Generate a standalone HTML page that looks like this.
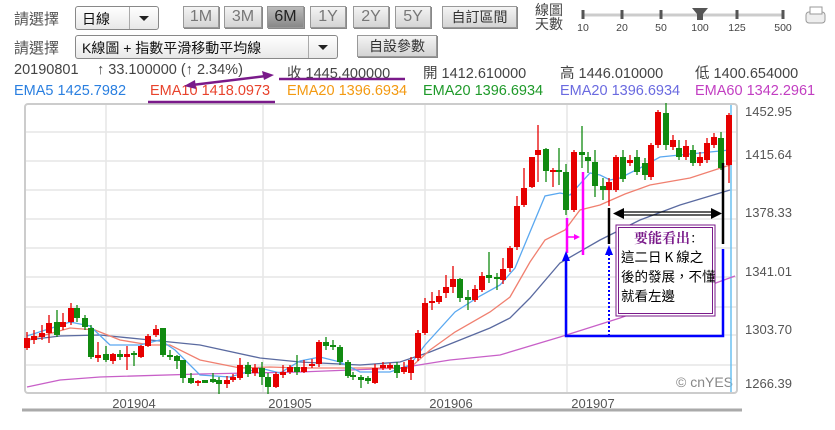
<!DOCTYPE html>
<html><head><meta charset="utf-8"><style>
html,body{margin:0;padding:0;background:#fff;width:835px;height:430px;overflow:hidden;font-family:"Liberation Sans","Noto Sans CJK TC",sans-serif;}
.a{position:absolute;white-space:nowrap;}
.lbl{font-size:15px;color:#555;}
.sel{position:absolute;border:1px solid #888;border-radius:3px;background:linear-gradient(#fff,#e8e8e8);font-size:14px;color:#111;box-sizing:border-box;}
.sel .t{position:absolute;left:6px;top:2px;}
.sel .d{position:absolute;right:0;top:0;bottom:0;width:28px;border-left:1px solid #aaa;}
.sel .d:after{content:"";position:absolute;left:9px;top:9px;border-left:5px solid transparent;border-right:5px solid transparent;border-top:5px solid #222;}
.btn{position:absolute;top:6px;height:22px;box-sizing:border-box;border:1px solid #999;background:linear-gradient(#f4f4f4,#d4d4d4);color:#777;font-size:16px;text-align:center;line-height:20px;box-shadow:1px 1px 0 #888;}
.r3{font-size:14.5px;color:#444;top:62px;}
.r4{font-size:14.5px;top:83px;}
</style></head><body>
<div class="a lbl" style="left:14px;top:8px;">請選擇</div>
<div class="sel" style="left:75px;top:6px;width:84px;height:24px;"><span class="t">日線</span><span class="d"></span></div>
<div class="btn" style="left:183px;width:36px;">1M</div>
<div class="btn" style="left:224px;width:38px;">3M</div>
<div class="btn" style="left:267px;width:37px;background:linear-gradient(#bbb,#888);color:#222;">6M</div>
<div class="btn" style="left:310px;width:36px;">1Y</div>
<div class="btn" style="left:353px;width:36px;">2Y</div>
<div class="btn" style="left:395px;width:36px;">5Y</div>
<div class="btn" style="left:442px;width:75px;font-size:14px;color:#333;">自訂區間</div>
<div class="a" style="left:535px;top:3px;font-size:14px;line-height:14px;color:#444;">線圖<br>天數</div>
<div class="a lbl" style="left:14px;top:37px;">請選擇</div>
<div class="sel" style="left:75px;top:35px;width:263px;height:24px;"><span class="t">K線圖 + 指數平滑移動平均線</span><span class="d"></span></div>
<div class="btn" style="left:357px;top:35px;width:80px;font-size:14px;color:#333;">自設參數</div>
<div class="a r3" style="left:14px;">20190801</div>
<div class="a r3" style="left:97px;">↑ 33.100000 (↑ 2.34%)</div>
<div class="a r3" style="left:287px;">收 1445.400000</div>
<div class="a r3" style="left:423px;">開 1412.610000</div>
<div class="a r3" style="left:560px;">高 1446.010000</div>
<div class="a r3" style="left:695px;">低 1400.654000</div>
<div class="a r4" style="left:14px;color:#2a7fe0;">EMA5 1425.7982</div>
<div class="a r4" style="left:150px;color:#e8432c;">EMA10 1418.0973</div>
<div class="a r4" style="left:287px;color:#f39a12;">EMA20 1396.6934</div>
<div class="a r4" style="left:423px;color:#1f9a2a;">EMA20 1396.6934</div>
<div class="a r4" style="left:560px;color:#6a6ae0;">EMA20 1396.6934</div>
<div class="a r4" style="left:695px;color:#c23ec2;">EMA60 1342.2961</div>
<svg id="s" width="835" height="430" style="position:absolute;left:0;top:0;" xmlns="http://www.w3.org/2000/svg">
<g id="bg"></g>
</svg>
<script>
var s=document.getElementById('s'),h='';
h+='<line x1="583" y1="15" x2="783" y2="15" stroke="#ccc" stroke-width="3"/>';
[583,622,661,737,783].forEach(function(x){h+='<rect x="'+(x-1.5)+'" y="10" width="3" height="9" fill="#555"/>';});
h+='<polygon points="692,8 708,8 703,14 703,20 697,20 697,14" fill="#555"/>';
[[583,'10'],[622,'20'],[661,'50'],[700,'100'],[737,'125'],[783,'500']].forEach(function(a){h+='<text x="'+a[0]+'" y="31" font-size="10.5" fill="#444" text-anchor="middle" font-family="Liberation Sans">'+a[1]+'</text>';});
h+='<rect x="806" y="12" width="19" height="11" rx="3" fill="#eee" stroke="#999"/><rect x="810" y="7" width="12" height="7" fill="#fff" stroke="#999"/>';
h+='<rect x="25" y="104" width="712" height="289" rx="3" fill="#fff" stroke="#ccc" stroke-width="2"/>';
h+='<line x1="22" y1="410" x2="742" y2="410" stroke="#aaa" stroke-width="3"/>';
[132,161,190,219,248,277,307,335,365].forEach(function(y){h+='<line x1="26" y1="'+y+'" x2="736" y2="'+y+'" stroke="#e6e6e6" stroke-width="1.5"/>';});
[106,263,425,567].forEach(function(x){h+='<line x1="'+x+'" y1="105" x2="'+x+'" y2="392" stroke="#e6e6e6" stroke-width="1.5"/>';});
[['1452.95',116],['1415.64',159],['1378.33',217],['1341.01',276],['1303.70',334],['1266.39',388]].forEach(function(a){h+='<text x="745" y="'+a[1]+'" font-size="13" fill="#555" font-family="Liberation Sans">'+a[0]+'</text>';});
[['201904',134],['201905',290],['201906',451],['201907',593]].forEach(function(a){h+='<text x="'+a[1]+'" y="408" font-size="13" fill="#555" text-anchor="middle" font-family="Liberation Sans">'+a[0]+'</text>';});
h+='<text x="733" y="387" font-size="14" fill="#888" text-anchor="end" font-family="Liberation Sans">© cnYES</text>';
h+='<line x1="731" y1="105" x2="731" y2="392" stroke="#6cc0f0" stroke-width="1.5"/>';
function pl(p,c){h+='<polyline fill="none" stroke="'+c+'" stroke-width="1.3" points="'+p+'"/>';}
pl('27,387 60,380 100,377 200,374 300,372 400,368 450,360 500,355 560,337 620,318 680,296 735,276','#c860c8');
pl('27,340 60,336 100,335 150,340 200,345 260,358 300,362 360,365 400,362 430,352 455,342 490,328 510,318 530,298 560,263 600,240 640,220 680,205 730,190','#5a6aa0');
pl('27,340 70,328 95,330 120,340 150,345 170,345 200,360 240,368 270,367 300,368 340,368 380,368 410,368 430,350 455,332 490,312 510,297 530,262 545,240 565,230 580,210 600,205 625,194 650,185 690,178 730,165','#f08070');
pl('27,336 70,322 90,326 110,345 140,345 160,340 175,350 200,375 230,377 260,368 280,373 300,361 320,357 340,362 360,372 390,372 410,365 425,345 455,312 480,296 500,285 515,268 530,232 545,196 560,193 570,195 590,173 600,175 610,180 620,178 640,168 660,157 700,153 730,150','#5aa8f0');
var C=[[27,348,338,332,350],[34,340,336,330,344],[42,337,333,325,340],[49,333,323,315,343],[57,322,335,310,337],[63,327,322,313,330],[71,322,308,303,325],[77,308,318,305,322],[85,318,327,315,330],[91,328,357,325,359],[98,358,355,342,362],[106,354,360,346,362],[113,361,354,353,364],[120,354,357,350,360],[127,357,354,346,370],[134,353,355,351,366],[141,357,346,345,358],[148,346,336,334,347],[156,335,329,325,337],[163,328,355,328,357],[170,355,357,350,360],[177,356,361,355,369],[183,360,378,360,383],[191,378,383,373,384],[198,383,381,380,386],[205,381,382,381,382],[213,380,381,373,383],[219,380,384,377,394],[227,384,380,376,388],[233,380,377,374,382],[240,378,365,358,380],[248,365,374,362,377],[255,373,368,364,376],[262,368,377,362,385],[268,377,387,373,394],[276,387,374,372,388],[283,375,372,365,378],[290,372,367,365,374],[297,367,372,355,375],[304,372,367,360,373],[312,366,364,359,368],[319,364,342,340,367],[326,342,346,337,350],[333,345,347,340,350],[340,347,362,345,365],[348,362,376,360,378],[353,375,377,372,380],[361,377,380,375,388],[368,379,380,376,384],[375,383,368,364,384],[383,367,366,362,370],[390,367,366,363,370],[397,365,373,362,378],[404,372,367,362,374],[411,373,360,357,380],[418,358,333,330,361],[425,333,303,298,335],[432,303,301,292,310],[439,302,296,290,304],[446,293,287,275,298],[453,287,279,266,293],[460,279,298,278,302],[468,298,299,290,310],[475,300,289,285,302],[482,290,276,272,292],[489,276,277,252,283],[497,277,279,273,290],[503,280,269,258,284],[510,268,248,246,272],[517,247,206,196,250],[524,205,188,168,207],[532,187,157,157,188],[538,155,150,125,182],[546,149,171,148,182],[553,172,170,168,187],[559,170,172,148,185],[566,172,210,164,215],[574,210,152,150,212],[582,152,155,126,168],[588,157,161,152,173],[595,162,186,150,197],[603,186,190,178,200],[609,190,182,178,206],[616,190,157,155,192],[623,157,179,150,182],[630,163,160,155,166],[637,157,172,150,175],[645,163,175,158,180],[651,177,145,143,180],[658,145,112,110,148],[666,113,145,103,150],[673,147,140,135,150],[679,148,157,140,160],[686,157,146,140,160],[693,150,163,145,166],[700,163,157,152,166],[707,160,143,138,163],[714,145,137,133,148],[721,138,168,132,170],[729,165,115,113,183]];
C.forEach(function(c){var up=c[2]<c[1],col=up?'#e60000':'#118a11',t=Math.min(c[1],c[2]),b=Math.max(c[1],c[2]);if(b-t<1.5){t-=1;b+=1;}
h+='<line x1="'+c[0]+'" y1="'+c[3]+'" x2="'+c[0]+'" y2="'+c[4]+'" stroke="'+col+'" stroke-width="1.3"/><rect x="'+(c[0]-3)+'" y="'+t+'" width="6" height="'+(b-t)+'" fill="'+col+'"/>';});
var P='#7a1a8a';
h+='<line x1="279" y1="79" x2="405" y2="79" stroke="'+P+'" stroke-width="2.5"/><line x1="148" y1="102" x2="275" y2="102" stroke="'+P+'" stroke-width="2.5"/>';
h+='<line x1="192" y1="85" x2="266" y2="76" stroke="'+P+'" stroke-width="2.5"/><polygon points="184,86 195,80 196,89" fill="'+P+'"/><polygon points="274,75 262,71 264,80" fill="'+P+'"/>';
h+='<line x1="567" y1="218" x2="567" y2="253" stroke="#f0f" stroke-width="2.5"/><line x1="583" y1="172" x2="583" y2="255" stroke="#f0f" stroke-width="2.5"/><line x1="568" y1="237" x2="576" y2="237" stroke="#f0f" stroke-width="1.5"/><polygon points="580,237 574,234 574,240" fill="#f0f"/>';
h+='<line x1="609" y1="208" x2="609" y2="244" stroke="#000" stroke-width="2.5"/><line x1="723" y1="163" x2="723" y2="244" stroke="#000" stroke-width="2.5"/>';
h+='<line x1="620" y1="212" x2="716" y2="212" stroke="#000" stroke-width="1.2"/><line x1="620" y1="215" x2="716" y2="215" stroke="#000" stroke-width="1.2"/><polygon points="613,213.5 624,208 624,219" fill="#000"/><polygon points="722,213.5 711,208 711,219" fill="#000"/>';
h+='<polyline points="566,258 566,336 723,336 723,249" fill="none" stroke="#0000ff" stroke-width="2.5"/><polygon points="566,251 562,261 570,261" fill="#00f"/>';
h+='<line x1="609" y1="336" x2="609" y2="255" stroke="#00f" stroke-width="2" stroke-dasharray="2,2"/><polygon points="609,245 605,255 613,255" fill="#00f"/>';
h+='<rect x="616" y="225" width="99" height="91" fill="#fff" stroke="'+P+'" stroke-width="1"/><rect x="618.5" y="227.5" width="94" height="86" fill="none" stroke="'+P+'" stroke-width="1"/>';
h+='<text x="634" y="243" font-size="14" font-weight="bold" fill="'+P+'" font-family="Noto Serif CJK SC,serif">要能看出<tspan fill="#000" font-weight="normal">：</tspan></text>';
['這二日 K 線之','後的發展，不懂','就看左邊'].forEach(function(t,i){h+='<text x="621" y="'+(262+i*19.5)+'" font-size="13.5" fill="#000" font-family="Noto Sans CJK TC,sans-serif">'+t+'</text>';});
s.innerHTML=h;
</script>
</body></html>
